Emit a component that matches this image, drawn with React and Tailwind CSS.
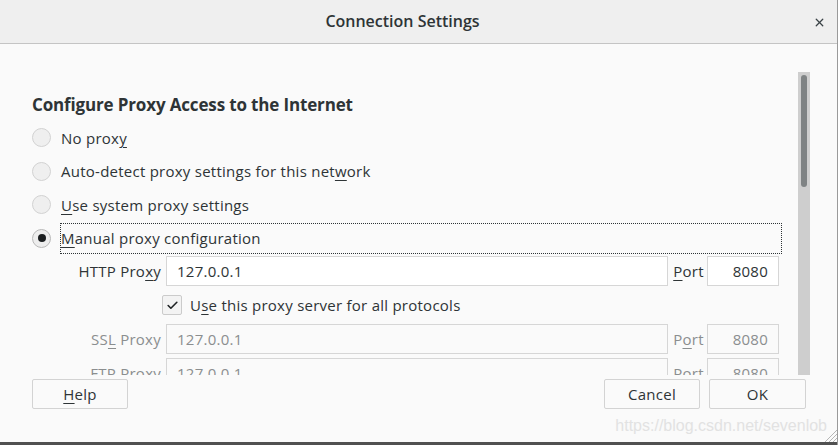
import { Check, X } from 'lucide-react'

const font = { fontFamily: '"Open Sans", "Noto Sans", sans-serif' }

function U({ children }) {
  return <span className="underline underline-offset-[3px] decoration-1">{children}</span>
}

function Radio({ checked, children, focused }) {
  return (
    <div className="flex items-center h-[33.5px]">
      <span
        className={
          'w-[19px] h-[19px] rounded-full border flex items-center justify-center ml-[32px] mr-[10px] ' +
          (checked ? 'border-[#b8b8b8] bg-[#ededed]' : 'border-[#d2d2d2] bg-[#efefef]')
        }
      >
        {checked && <span className="w-[8px] h-[8px] rounded-full bg-[#1b1e20]" />}
      </span>
      {focused ? (
        <span className="w-[722px] h-[31px] border border-dotted border-[#2e3436] flex items-center -ml-px">
          {children}
        </span>
      ) : (
        <span>{children}</span>
      )}
    </div>
  )
}

function Field({ value, disabled, right }) {
  return (
    <div
      className={
        'h-[30px] border border-[#d6d6d6] flex items-center px-[10px] ' +
        (disabled ? 'bg-[#fafafa] text-[#8b8e8f]' : 'bg-white text-[#2e3436]') +
        (right ? ' justify-end' : '')
      }
    >
      {value}
    </div>
  )
}

function Button({ children, className }) {
  return (
    <div
      className={
        'h-[30px] border border-[#d3d3d3] rounded-[2px] bg-[#fafafa] flex items-center justify-center text-[#2e3436] ' +
        className
      }
    >
      {children}
    </div>
  )
}

export default function App() {
  return (
    <div
      className="w-[838px] h-[445px] bg-[#fafafa] flex flex-col relative overflow-hidden text-[15px] tracking-[0.25px] text-[#2e3436] border-r border-[#9a9a9a]"
      style={font}
    >
      {/* Title bar */}
      <div className="h-[44px] shrink-0 bg-[#efefef] border-b border-[#c4c4c4] flex items-center justify-center relative">
        <span className="text-[16px] font-semibold tracking-normal text-[#2e3436] -mt-px mr-[32px]">Connection Settings</span>
        <X className="absolute right-[11px] top-[16px] w-[13px] h-[13px] text-[#3a4246]" strokeWidth={2.4} />
      </div>

      {/* Scroll area */}
      <div className="h-[331px] shrink-0 flex relative">
        <div className="flex-1 overflow-hidden">
          <div className="pt-[49px] pl-[32px] text-[17px] font-bold leading-[24px] tracking-[-0.15px]">
            Configure Proxy Access to the Internet
          </div>
          <div className="pt-[4px]">
            <Radio>No prox<U>y</U></Radio>
            <Radio>Auto-detect proxy settings for this net<U>w</U>ork</Radio>
            <Radio><U>U</U>se system proxy settings</Radio>
            <Radio checked focused><U>M</U>anual proxy configuration</Radio>
          </div>

          <div className="grid grid-cols-[134px_502px_39px_72px] ml-[32px] mt-[1px] items-center">
            <div className="text-right pr-[5px]">HTTP Pro<U>x</U>y</div>
            <Field value="127.0.0.1" />
            <div className="text-center pl-[2px]"><U>P</U>ort</div>
            <Field value="8080" right />

            <div />
            <div className="col-span-3 flex items-center h-[38px] -ml-[4px]">
              <span className="w-[20px] h-[20px] border border-[#cbcbcb] rounded-[2px] bg-[#f3f3f3] flex items-center justify-center mr-[8px]">
                <Check className="w-[13px] h-[13px] text-[#1e2224]" strokeWidth={3} />
              </span>
              U<U>s</U>e this proxy server for all protocols
            </div>

            <div className="text-right pr-[5px] text-[#8b8e8f]">SS<U>L</U> Proxy</div>
            <Field value="127.0.0.1" disabled />
            <div className="text-center pl-[2px] text-[#8b8e8f]">P<U>o</U>rt</div>
            <Field value="8080" disabled right />

            <div className="h-[4px] col-span-4" />

            <div className="text-right pr-[5px] text-[#8b8e8f]">FTP Pr<U>o</U>xy</div>
            <Field value="127.0.0.1" disabled />
            <div className="text-center pl-[2px] text-[#8b8e8f]">Po<U>r</U>t</div>
            <Field value="8080" disabled right />
          </div>
        </div>

        {/* Scrollbar */}
        <div className="w-[12px] mr-[27px] mt-[28px] bg-[#cecece] flex justify-center">
          <div className="w-[6px] h-[112px] mt-[3px] rounded-full bg-[#7f8384]" />
        </div>
      </div>

      {/* Footer */}
      <div className="flex-1 relative">
        <div className="flex items-start pt-[4px] pl-[32px] pr-[31px]">
          <Button className="w-[96px]"><U>H</U>elp</Button>
          <div className="flex-1" />
          <Button className="w-[96px]">Cancel</Button>
          <Button className="w-[97px] ml-[9px]">OK</Button>
        </div>
        <div
          className="absolute right-[10px] bottom-[7px] text-[16px] tracking-normal text-[#e2e2e2]"
          style={{ fontFamily: '"Liberation Sans", Arial, sans-serif' }}
        >
          https://blog.csdn.net/sevenlob
        </div>
        <svg className="absolute right-0 bottom-[3px]" width="16" height="16" viewBox="0 0 16 16">
          <path d="M4 16 L16 4 M8 16 L16 8 M12 16 L16 12" stroke="#b5b5b5" strokeWidth="1" />
        </svg>
        <div className="absolute left-0 right-0 bottom-0 h-[3px] bg-[#505050]" />
      </div>
    </div>
  )
}
